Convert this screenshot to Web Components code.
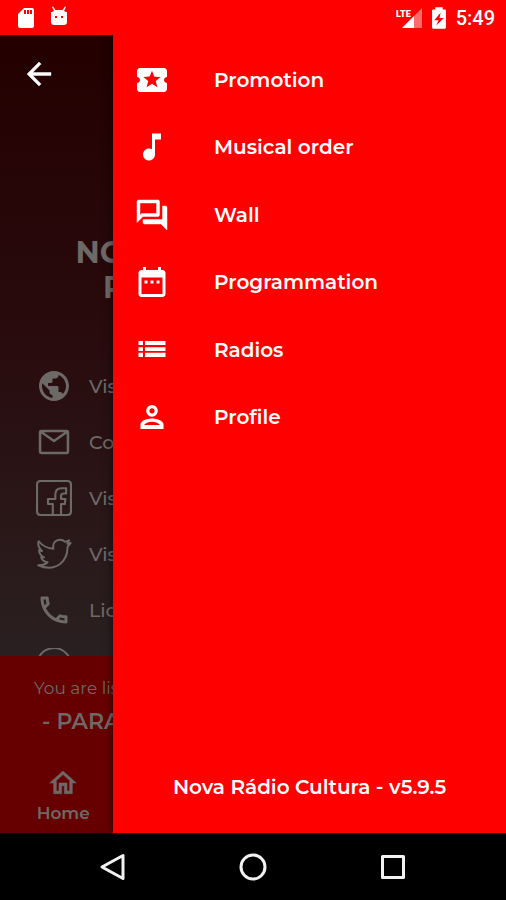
<!DOCTYPE html>
<html lang="en">
<head>
<meta charset="UTF-8">
<meta name="viewport" content="width=device-width, initial-scale=1">
<title>Nova Rádio Cultura</title>
<style>
    body {
        margin: 0;
        background: #000;
        color: #fff;
        font-family: Montserrat, Inter, "Open Sans", sans-serif;
    }
</style>
</head>
<body>

<radio-app></radio-app>

<!-- phone status bar -->
<template id="status-bar">
    <style>
        :host {
            display: flex;
            align-items: center;
            box-sizing: border-box;
            height: 35px;
            padding: 0 11px 0 14px;
            background: #f00;
            font: 500 20px/24px Roboto, sans-serif;
        }
        .left, .right { display: flex; align-items: center; gap: 9px; }
        .right { margin-left: auto; }
        .signal { display: block; }
    </style>
    <div class="left">
        <app-icon name="sd" size="24"></app-icon>
        <app-icon name="robot" size="24"></app-icon>
    </div>
    <div class="right">
        <svg class="signal" width="26" height="24" viewBox="0 0 26 24" aria-label="LTE">
            <path d="M26 2v20H6z" fill="#ff6b6b"/>
            <path d="M18 10v12H6z" fill="#fff"/>
            <path d="M0 0h15v12H0z" fill="#f00"/>
            <text x="0" y="11" font-family="Roboto, sans-serif" font-size="9" font-weight="900" fill="#fff">LTE</text>
        </svg>
        <app-icon name="battery" size="16" box="0 0 15 24"></app-icon>
        <span>5:49</span>
    </div>
</template>

<!-- page under the drawer -->
<template id="contact-page">
    <style>
        :host {
            display: flex;
            flex-direction: column;
            flex: 1;
            min-width: 0;
            min-height: 0;
            color: #6d6967;
            background: linear-gradient(#240000, #290c0e 40%, #2a2122 80%);
        }
        header { padding: 21px; }
        button {
            display: block;
            padding: 0;
            border: 0;
            background: none;
            color: #fff;
        }
        h1 {
            width: 125px;
            margin: 122px 0 53px;
            font-size: 30px;
            font-weight: 700;
            line-height: 35px;
            text-align: right;
        }
        h1 span { display: block; }
        .links { flex: 1 1 0; min-height: 0; overflow: hidden; }
    </style>
    <header><button aria-label="Back"><app-icon name="back"></app-icon></button></header>
    <h1><span>NO</span><span>P</span></h1>
    <div class="links">
        <contact-link icon="globe">Vis</contact-link>
        <contact-link icon="mail">Co</contact-link>
        <contact-link icon="facebook">Vis</contact-link>
        <contact-link icon="twitter">Vis</contact-link>
        <contact-link icon="phone">Lic</contact-link>
        <contact-link icon="whatsapp"></contact-link>
    </div>
    <player-bar></player-bar>
</template>

<template id="contact-link">
    <style>
        :host { display: block; }
        a {
            display: flex;
            align-items: center;
            gap: 17px;
            height: 56px;
            padding-left: 36px;
            color: inherit;
            font-size: 19px;
            font-weight: 500;
            text-decoration: none;
        }
    </style>
    <a href="#"><app-icon></app-icon><slot></slot></a>
</template>

<template id="player-bar">
    <style>
        :host {
            display: flex;
            flex-direction: column;
            box-sizing: border-box;
            height: 177px;
            padding-top: 20px;
            background: #600;
        }
        p { margin: 0 0 0 34px; font-size: 17px; line-height: 24px; }
        strong { margin: 9px 0 0 42px; font-size: 22px; font-weight: 600; line-height: 26px; }
        nav { display: grid; grid-template-columns: repeat(4, 1fr); margin-top: auto; padding-bottom: 8px; }
        a {
            display: flex;
            flex-direction: column;
            align-items: center;
            color: inherit;
            font-size: 17px;
            font-weight: 600;
            line-height: 24px;
            gap: 2px;
            text-decoration: none;
        }
    </style>
    <p>You are lis</p>
    <strong>- PARA</strong>
    <nav><a href="#"><app-icon name="home" size="32"></app-icon>Home</a></nav>
</template>

<!-- drawer -->
<template id="side-drawer">
    <style>
        :host {
            display: flex;
            flex-direction: column;
            box-sizing: border-box;
            padding: 11px 0 32px;
            background: #f00;
            box-shadow: 0 0 8px rgba(0, 0, 0, .6);
        }
        nav { display: grid; grid-auto-rows: 1fr; height: 405px; }
        footer {
            margin-top: auto;
            font-size: 20px;
            font-weight: 600;
            line-height: 28px;
            text-align: center;
        }
    </style>
    <nav><slot></slot></nav>
    <footer><slot name="version"></slot></footer>
</template>

<template id="drawer-item">
    <style>
        :host { display: flex; }
        a {
            display: flex;
            flex: 1;
            align-items: center;
            gap: 44px;
            padding-left: 21px;
            color: inherit;
            font-size: 20px;
            font-weight: 600;
            text-decoration: none;
        }
    </style>
    <a href="#"><app-icon></app-icon><slot></slot></a>
</template>

<!-- android buttons -->
<template id="system-nav">
    <style>
        :host {
            display: grid;
            grid-template-columns: repeat(3, 1fr);
            align-items: center;
            justify-items: center;
            box-sizing: border-box;
            height: 67px;
            padding: 0 43px;
            background: #000;
        }
        button { display: block; padding: 0; border: 0; background: none; color: #f2f2f2; }
    </style>
    <button aria-label="Back"><app-icon name="sysback" size="28" box="0 0 28 28"></app-icon></button>
    <button aria-label="Home"><app-icon name="syshome" size="28" box="0 0 28 28"></app-icon></button>
    <button aria-label="Recent"><app-icon name="sysrecent" size="28" box="0 0 28 28"></app-icon></button>
</template>

<template id="radio-app">
    <style>
        :host { display: flex; flex-direction: column; min-height: 100vh; }
        main { display: flex; flex: 1; position: relative; overflow: hidden; }
        side-drawer { position: absolute; top: 0; right: 0; bottom: 0; left: 113px; }
    </style>
    <status-bar></status-bar>
    <main>
        <contact-page></contact-page>
        <side-drawer>
            <drawer-item icon="ticket">Promotion</drawer-item>
            <drawer-item icon="note">Musical order</drawer-item>
            <drawer-item icon="forum">Wall</drawer-item>
            <drawer-item icon="calendar">Programmation</drawer-item>
            <drawer-item icon="list">Radios</drawer-item>
            <drawer-item icon="person">Profile</drawer-item>
            <span slot="version">Nova Rádio Cultura - v5.9.5</span>
        </side-drawer>
    </main>
    <system-nav></system-nav>
</template>

<script>
"use strict";

const line = (d, w = 1) => `<path d="${d}" fill="none" stroke="currentColor" stroke-width="${w}" stroke-linejoin="round" stroke-linecap="round"/>`;

const icons = {
    sd: `<path fill-rule="evenodd" d="M18 2h-8L4 8v12c0 1.100.9 2 2 2h12c1.100 0 2-.9 2-2V4c0-1.100-.9-2-2-2zm-6 6h-2V4h2v4zm3 0h-2V4h2v4zm3 0h-2V4h2v4z"/>`,
    robot: `<path fill-rule="evenodd" d="M5 6L7 5 5 1l1-.5L8.500 4h7L18 .5l1 .5-2 4 2 1h1v10q0 3-3 3H7q-3 0-3-3V6zm3 4v2h2v-2zm6 0v2h2v-2z"/>`,
    battery: `<path fill-rule="evenodd" d="M4 2h7v2h2q1 0 1 1v16q0 1-1 1H2q-1 0-1-1V5q0-1 1-1h2zM9 7l-6 7h4l-2 5 7-7H8z"/>`,
    back: `<path stroke="currentColor" stroke-width=".3" d="M20 11H7.830l5.590-5.590L12 4l-8 8 8 8 1.410-1.410L7.830 13H20v-2z"/>`,
    ticket: `<path d="M20 12c0-1.100.9-2 2-2V6c0-1.100-.9-2-2-2H4c-1.100 0-1.990.9-1.990 2v4c1.100 0 1.990.9 1.990 2s-.89 2-2 2v4c0 1.100.9 2 2 2h16c1.100 0 2-.9 2-2v-4c-1.100 0-2-.9-2-2zm-4.420 4.800L12 14.500l-3.580 2.300 1.080-4.120-3.290-2.690 4.240-.25L12 5.800l1.540 3.950 4.240.25-3.290 2.690 1.090 4.110z"/>`,
    note: `<path d="M12 3v10.550c-.59-.34-1.270-.55-2-.55-2.210 0-4 1.790-4 4s1.790 4 4 4 4-1.790 4-4V7h4V3h-6z"/>`,
    forum: `<path stroke="currentColor" stroke-width=".3" d="M15 4v7H5.170L4 12.170V4h11m1-2H3c-.55 0-1 .45-1 1v14l4-4h10c.55 0 1-.45 1-1V3c0-.55-.45-1-1-1zm5 4h-2v9H6v2c0 .55.45 1 1 1h11l4 4V7c0-.55-.45-1-1-1z"/>`,
    calendar: `<path d="M9 11H7v2h2v-2zm4 0h-2v2h2v-2zm4 0h-2v2h2v-2zm2-7h-1V2h-2v2H8V2H6v2H5c-1.110 0-1.990.9-1.990 2L3 20c0 1.100.89 2 2 2h14c1.100 0 2-.9 2-2V6c0-1.100-.9-2-2-2zm0 16H5V9h14v11z"/>`,
    list: `<path d="M3 6h3v2.700H3zm0 4.200h3v2.400H3zm0 3.700h3v2.700H3zM7.300 6H21v2.700H7.300zm0 4.200H21v2.400H7.300zm0 3.700H21v2.700H7.300z"/>`,
    person: `<path fill-rule="evenodd" d="M12 4a3.900 3.900 0 1 0 0 7.800A3.900 3.900 0 0 0 12 4zm0 2.200a1.700 1.700 0 1 1 0 3.400 1.700 1.700 0 0 1 0-3.400zM12 13c-2.670 0-7.700 1.340-7.700 4v3h15.400v-3c0-2.660-5.030-4-7.700-4zm0 2.200c2.500 0 4.600.9 5.200 2.100H6.800c.6-1.200 2.700-2.100 5.200-2.100z"/>`,
    globe: `<path d="M12 2C6.480 2 2 6.480 2 12s4.480 10 10 10 10-4.480 10-10S17.520 2 12 2zm-1 17.930c-3.950-.49-7-3.850-7-7.930 0-.62.08-1.210.21-1.790L9 15v1c0 1.100.9 2 2 2v1.930zm6.900-2.540c-.26-.81-1-1.390-1.900-1.390h-1v-3c0-.55-.45-1-1-1H8v-2h2c.55 0 1-.45 1-1V7h2c1.100 0 2-.9 2-2v-.41c2.930 1.190 5 4.060 5 7.410 0 2.080-.8 3.970-2.100 5.390z"/>`,
    mail: line("M3.500 4.700h17q.8 0 .8.800v13q0 .8-.8.800h-17q-.8 0-.8-.8v-13q0-.8.8-.8zM3 5l9 6.300L21 5", 1.7),
    facebook: line("M3 .7h18q2.300 0 2.300 2.300v18q0 2.300-2.300 2.300h-4.300V16h2.500l.4-3.300h-2.900v-2q0-1.700 1.700-1.700h1.700V5.500h-3q-4.200 0-4.200 4.200v3H8V16h3.200v7.300H3Q.7 23.300.7 21V3Q.7.7 3 .7zM11.200 23.300h5.500", 1.4),
    twitter: line("M1.800 3.500q4 4.800 9.800 5-.8-5.300 4.100-6 2.200-.1 3.600 1.400l2.800-1-1.200 2.300 2.200-.5-2.100 2.500q.2 7.100-4.700 11.300-6.200 4.700-14.800 1 4.100.1 6.200-2-3.200-.5-4.300-3.300h2Q2.200 12.900 2 9.500l2 .5Q.6 7.100 1.800 3.500z", 1.3),
    phone: `<path d="M6.540 5c.06.89.21 1.760.45 2.590l-1.200 1.200c-.41-1.200-.67-2.470-.76-3.790h1.510m9.860 12.020c.85.24 1.720.39 2.600.45v1.490c-1.320-.09-2.590-.35-3.800-.75l1.200-1.190M7.500 3H4c-.55 0-1 .45-1 1 0 9.390 7.610 17 17 17 .55 0 1-.45 1-1v-3.490c0-.55-.45-1-1-1-1.240 0-2.450-.2-3.570-.57-.1-.04-.21-.05-.31-.05-.26 0-.51.1-.71.29l-2.200 2.200c-2.830-1.450-5.150-3.760-6.590-6.590l2.200-2.200c.28-.28.36-.67.25-1.020C8.700 6.450 8.500 5.250 8.500 4c0-.55-.45-1-1-1z"/>`,
    whatsapp: line("M1 23l1.500-5.500A11.300 11.300 0 1 1 7 21.500zM7 6q-2 2 1 6t7 5q3 0 3-3l-3-1.500-2 1.500-4-4 1-2z", 1.3),
    home: `<path stroke="currentColor" stroke-width=".4" d="M12 5.690l5 4.500V18h-2v-6H9v6H7v-7.810l5-4.500M12 3L2 12h3v8h6v-6h2v6h6v-8h3L12 3z"/>`,
    sysback: line("M24 2.500v23L3 14z", 3),
    syshome: `<circle cx="14" cy="14" r="12" fill="none" stroke="currentColor" stroke-width="3"/>`,
    sysrecent: line("M3.500 3.500h21v21h-21z", 3)
};

class AppIcon extends HTMLElement {
    connectedCallback() {
        const size = this.getAttribute("size") || 36;
        const box = this.getAttribute("box") || "0 0 24 24";
        const height = Math.round(size * box.split(" ")[3] / box.split(" ")[2]);
        this.attachShadow({mode: "open"}).innerHTML = `
            <style>
                :host { display: block; flex: none; }
                svg { display: block; fill: currentColor; }
            </style>
            <svg width="${size}" height="${height}" viewBox="${box}" aria-hidden="true">${icons[this.getAttribute("name")]}</svg>`;
    }
}

// base: clones the template that has the same id as the tag
class TemplateElement extends HTMLElement {
    connectedCallback() {
        const tmpl = document.getElementById(this.localName);
        const content = tmpl.content.cloneNode(true);
        if (this.hasAttribute("icon")) {
            content.querySelector("app-icon").setAttribute("name", this.getAttribute("icon"));
        }
        this.attachShadow({mode: "open"}).append(content);
    }
}

customElements.define("app-icon", AppIcon);
customElements.define("status-bar", class extends TemplateElement {});
customElements.define("contact-link", class extends TemplateElement {});
customElements.define("player-bar", class extends TemplateElement {});
customElements.define("contact-page", class extends TemplateElement {});
customElements.define("drawer-item", class extends TemplateElement {});
customElements.define("side-drawer", class extends TemplateElement {});
customElements.define("system-nav", class extends TemplateElement {});
customElements.define("radio-app", class extends TemplateElement {});
</script>
</body>
</html>
